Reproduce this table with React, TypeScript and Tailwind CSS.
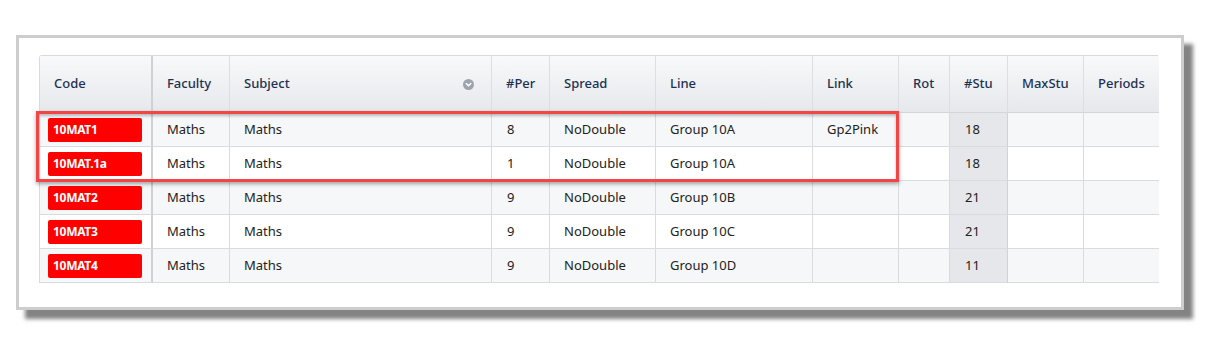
import React from 'react'

const columns = [
  { key: 'code', label: 'Code' },
  { key: 'faculty', label: 'Faculty' },
  { key: 'subject', label: 'Subject', menu: true },
  { key: 'per', label: '#Per' },
  { key: 'spread', label: 'Spread' },
  { key: 'line', label: 'Line' },
  { key: 'link', label: 'Link' },
  { key: 'rot', label: 'Rot' },
  { key: 'stu', label: '#Stu' },
  { key: 'maxStu', label: 'MaxStu' },
  { key: 'periods', label: 'Periods' },
]

const rows = [
  { code: '10MAT1', faculty: 'Maths', subject: 'Maths', per: '8', spread: 'NoDouble', line: 'Group 10A', link: 'Gp2Pink', stu: '18' },
  { code: '10MAT.1a', faculty: 'Maths', subject: 'Maths', per: '1', spread: 'NoDouble', line: 'Group 10A', link: '', stu: '18' },
  { code: '10MAT2', faculty: 'Maths', subject: 'Maths', per: '9', spread: 'NoDouble', line: 'Group 10B', link: '', stu: '21' },
  { code: '10MAT3', faculty: 'Maths', subject: 'Maths', per: '9', spread: 'NoDouble', line: 'Group 10C', link: '', stu: '21' },
  { code: '10MAT4', faculty: 'Maths', subject: 'Maths', per: '9', spread: 'NoDouble', line: 'Group 10D', link: '', stu: '11' },
]

function MenuDot() {
  return (
    <svg width="11" height="11" viewBox="0 0 11 11">
      <circle cx="5.5" cy="5.5" r="5.5" fill="#9ea3ad" />
      <path d="M3.2 4.5 L5.5 6.8 L7.8 4.5" fill="none" stroke="#fff" strokeWidth="1.6" strokeLinecap="round" strokeLinejoin="round" />
    </svg>
  )
}

export default function App() {
  return (
    <div className="w-[1216px] h-[349px] bg-white pt-[35px] pl-4 font-['Noto_Sans',sans-serif]">
      {/* framed screenshot */}
      <div className="w-[1168px] h-[275px] border-[3px] border-[#cdcdcd] bg-white pt-[17px] pl-5 shadow-[9px_9px_4px_rgba(90,90,90,0.75)]">
        <div className="relative w-[1119px]">
          <div className="grid grid-cols-[113px_77px_262px_58px_106px_157px_86px_51px_58px_76px_75px] border-t border-l border-[#d8dadf] rounded-tl-[3px] text-[13px]">
            {/* header */}
            {columns.map((c, i) => (
              <div
                key={c.key}
                className={`h-[57px] flex items-center justify-between pl-[14px] pr-[17px] bg-gradient-to-b from-[#f8f9fa] to-[#e6e8ec] border-b border-[#d3d5da] text-[#1d3153] font-medium ${i === 0 ? 'border-r-2 border-r-[#cfd1d6]' : i === columns.length - 1 ? '' : 'border-r border-r-[#dcdee2]'}`}
              >
                <span>{c.label}</span>
                {c.menu && <MenuDot />}
              </div>
            ))}

            {/* body */}
            {rows.map((r, ri) => {
              const bg = ri % 2 === 0 ? 'bg-[#f6f7f9]' : 'bg-white'
              const cell = `h-[34px] flex items-center border-b border-b-[#d9dbdf] border-r border-r-[#d9dbdf] text-[#222] ${bg}`
              return (
                <React.Fragment key={r.code}>
                  <div className={`h-[34px] flex items-center pl-2 border-b border-b-[#d9dbdf] border-r-2 border-r-[#cfd1d6] ${bg}`}>
                    <span className="w-[94px] h-[24px] flex items-center pl-[5px] rounded-[2px] bg-[#ff0000] text-white font-bold text-[12px] tracking-[-0.3px]">
                      {r.code}
                    </span>
                  </div>
                  <div className={`${cell} pl-[14px]`}>{r.faculty}</div>
                  <div className={`${cell} pl-[14px]`}>{r.subject}</div>
                  <div className={`${cell} pl-[15px]`}>{r.per}</div>
                  <div className={`${cell} pl-[14px]`}>{r.spread}</div>
                  <div className={`${cell} pl-[14px]`}>{r.line}</div>
                  <div className={`${cell} pl-[14px]`}>{r.link}</div>
                  <div className={cell}></div>
                  <div className="h-[34px] flex items-center pl-[15px] border-b border-b-[#d9dbdf] border-r border-r-[#d0d2d6] bg-[#e6e7eb] text-[#222]">{r.stu}</div>
                  <div className={cell}></div>
                  <div className={`${cell} border-r-0`}></div>
                </React.Fragment>
              )
            })}
          </div>

          {/* highlight around the two linked classes */}
          <div className="absolute left-[-3px] top-[56px] w-[863px] h-[71px] border-[3px] border-[#f24545] shadow-[0_2px_4px_rgba(0,0,0,0.35),inset_0_2px_3px_rgba(0,0,0,0.25)] pointer-events-none" />
        </div>
      </div>
    </div>
  )
}
